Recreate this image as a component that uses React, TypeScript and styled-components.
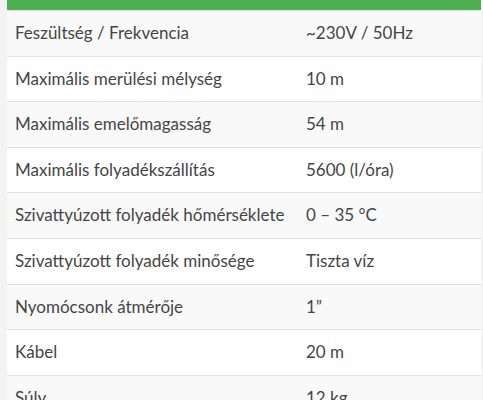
import React from "react";
import styled, { createGlobalStyle } from "styled-components";

const GlobalStyle = createGlobalStyle`
  body {
    margin: 0;
    background: #f3f3f3;
    font-family: Lato, "Open Sans", Arial, sans-serif;
  }
`;

const specs: [string, string][] = [
  ["Feszültség / Frekvencia", "~230V / 50Hz"],
  ["Maximális merülési mélység", "10 m"],
  ["Maximális emelőmagasság", "54 m"],
  ["Maximális folyadékszállítás", "5600 (l/óra)"],
  ["Szivattyúzott folyadék hőmérséklete", "0 – 35 °C"],
  ["Szivattyúzott folyadék minősége", "Tiszta víz"],
  ["Nyomócsonk átmérője", "1”"],
  ["Kábel", "20 m"],
  ["Súly", "12 kg"],
];

const Wrapper = styled.div`
  margin-left: 7px;
  width: 474px;
  background: #fff;
`;

const HeaderBar = styled.div`
  height: 10px;
  background: #4caf50;
  border-bottom: 1px solid #e4e4e4;
`;

const SpecTable = styled.table`
  width: 100%;
  border-collapse: collapse;
  table-layout: fixed;
  color: #454545;
  font-size: 17px;
`;

const Row = styled.tr<{ $odd: boolean }>`
  background: ${(p) => (p.$odd ? "#f9f9f9" : "#ffffff")};
`;

const Cell = styled.td<{ $label?: boolean }>`
  box-sizing: border-box;
  width: ${(p) => (p.$label ? "291px" : "auto")};
  padding: 12px 8px;
  line-height: 20.6px;
  border-bottom: 1px solid #e2e2e2;
  white-space: nowrap;
`;

export default function App() {
  return (
    <>
      <GlobalStyle />
      <Wrapper>
        <HeaderBar />
        <SpecTable>
          <tbody>
            {specs.map(([label, value], i) => (
              <Row key={label} $odd={i % 2 === 0}>
                <Cell $label>{label}</Cell>
                <Cell>{value}</Cell>
              </Row>
            ))}
          </tbody>
        </SpecTable>
      </Wrapper>
    </>
  );
}
